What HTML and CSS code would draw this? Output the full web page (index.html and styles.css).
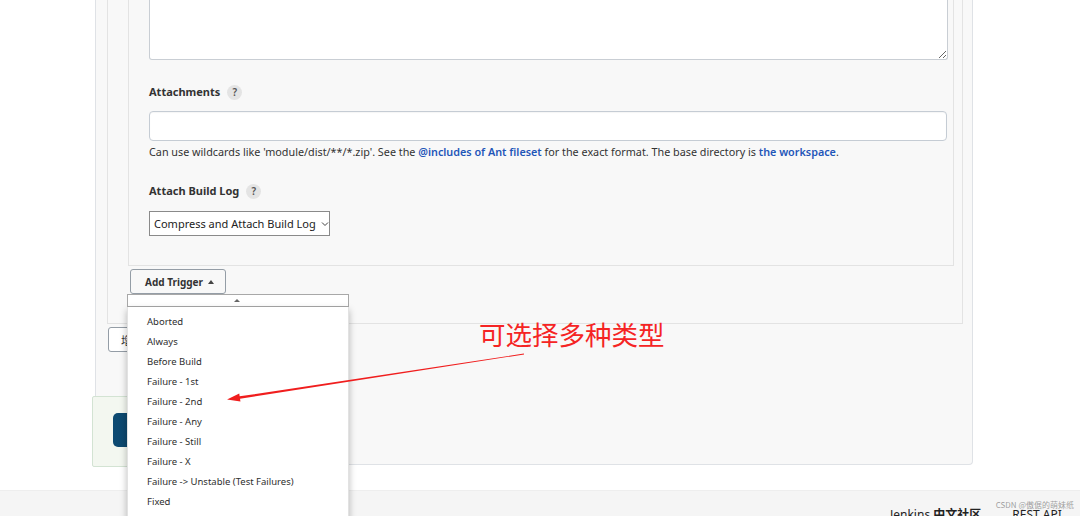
FILE: index.html
```html
<!DOCTYPE html>
<html lang="zh">
<head>
<meta charset="utf-8">
<title>Jenkins</title>
<link rel="stylesheet" href="styles.css">
</head>
<body>
<div class="main">
  <div class="panel">
    <div class="box2">
      <div class="box3">
        <textarea class="textarea"></textarea>
        <div class="label">Attachments <span class="help">?</span></div>
        <input class="input" type="text">
        <div class="hint">Can use wildcards like 'module/dist/**/*.zip'. See the <a class="link">@includes of Ant fileset</a> for the exact format. The base directory is <a class="link">the workspace</a>.</div>
        <div class="label label2">Attach Build Log <span class="help">?</span></div>
        <div class="select">Compress and Attach Build Log <svg class="chev" width="8" height="6" viewBox="0 0 8 6"><path d="M1 1.5 L4 4.5 L7 1.5" fill="none" stroke="#444" stroke-width="1"/></svg></div>
      </div>
      <button class="btn trigger">Add Trigger <span class="tri"></span></button>
    </div>
    <button class="btn postbtn">增加构建后操作步骤</button>
  </div>

  <div class="bottombar"><button class="savebtn">保存</button></div>

  <div class="dropdown">
    <div class="dd-head"><span class="tri small"></span></div>
    <ul class="dd-list">
      <li>Aborted</li>
      <li>Always</li>
      <li>Before Build</li>
      <li>Failure - 1st</li>
      <li>Failure - 2nd</li>
      <li>Failure - Any</li>
      <li>Failure - Still</li>
      <li>Failure - X</li>
      <li>Failure -&gt; Unstable (Test Failures)</li>
      <li>Fixed</li>
      <li>Not Built</li>
    </ul>
  </div>

  <div class="note">可选择多种类型</div>
  <svg class="arrow" width="1080" height="516" viewBox="0 0 1080 516">
    <polygon points="523.9,353.6 524.1,354.4 240.03,398.73 240.45,401.5 227,399.5 239.25,393.6 239.67,396.35" fill="#f01e1e"/>
  </svg>
</div>
<footer class="footer">
  <span class="f-link">Jenkins <b>中文社区</b></span>
  <span class="f-link api">REST API</span>
  <span class="watermark">CSDN @傲倨的萌妹纸</span>
</footer>
</body>
</html>
```
FILE: styles.css
```css
html, body {
  margin: 0;
  padding: 0;
  overflow: hidden;
  height: 516px;
  background: #ffffff;
  font-family: "Noto Sans", "Open Sans", "Noto Sans CJK SC", sans-serif;
  color: #333;
}
.main {
  position: relative;
  height: 490px;
}
.panel {
  margin-left: 95px;
  width: 878px;
  height: 465px;
  box-sizing: border-box;
  border: 1px solid #dfe2e6;
  border-top: 0;
  border-radius: 0 0 4px 4px;
  background: #f8f8f8;
  padding: 0 0 0 11px;
}
.box2 {
  width: 856px;
  box-sizing: border-box;
  border: 1px solid #e3e3e3;
  border-top: 0;
  padding: 0 8px 29px 20px;
}
.box3 {
  width: 826px;
  box-sizing: border-box;
  border: 1px solid #e3e3e3;
  border-top: 0;
  padding: 0 5px 29px 20px;
  display: flex;
  flex-direction: column;
  align-items: flex-start;
}
.textarea {
  display: block;
  width: 799px;
  height: 60px;
  box-sizing: border-box;
  margin: 0;
  border: 1px solid #c9ced4;
  border-top: 0;
  border-radius: 0 0 3px 3px;
  background: #fff;
  resize: vertical;
}
.label {
  margin-top: 22px;
  height: 20px;
  line-height: 20px;
  font-size: 11px;
  font-weight: 700;
  color: #333;
  display: flex;
  align-items: center;
}
.label2 { margin-top: 21px; }
.help {
  display: inline-flex;
  align-items: center;
  justify-content: center;
  width: 15px;
  height: 15px;
  margin-left: 7px;
  border-radius: 50%;
  background: #e4e4e4;
  color: #555;
  font-size: 10px;
  font-weight: 600;
}
.input {
  display: block;
  margin: 9px 0 0 0;
  width: 798px;
  height: 30px;
  box-sizing: border-box;
  border: 1px solid #c5ccd4;
  border-radius: 4px;
  background: #fff;
  box-shadow: inset 0 1px 1px rgba(0,0,0,0.04);
}
.hint {
  margin-top: 3px;
  line-height: 16px;
  font-size: 10.8px;
  color: #333;
  white-space: nowrap;
}
.link {
  color: #1f56b8;
  font-weight: 600;
  text-decoration: none;
}
.select {
  margin-top: 10px;
  height: 25px;
  width: 181px;
  box-sizing: border-box;
  border: 1px solid #8a8a8a;
  background: #fff;
  font-size: 11px;
  line-height: 23px;
  padding-left: 4px;
  display: flex;
  align-items: center;
  gap: 5px;
  color: #222;
  white-space: nowrap;
}
.chev { flex: none; }
.btn {
  font-family: inherit;
  box-sizing: border-box;
  height: 25px;
  border: 1px solid #949da6;
  border-radius: 3px;
  background: #f8f8f8;
  color: #333;
  padding: 0;
  cursor: pointer;
}
.trigger {
  margin: 3px 0 0 2px;
  width: 96px;
  font-size: 10px;
  font-weight: 700;
  display: flex;
  align-items: center;
  justify-content: center;
  gap: 5px;
  padding-left: 3px;
}
.tri {
  display: inline-block;
  width: 0;
  height: 0;
  border-left: 3.5px solid transparent;
  border-right: 3.5px solid transparent;
  border-bottom: 4px solid #444;
}
.tri.small {
  border-left-width: 3px;
  border-right-width: 3px;
  border-bottom: 3px solid #666;
}
.postbtn {
  margin: 3px 0 0 1px;
  width: 160px;
  font-size: 11px;
  text-align: left;
  padding-left: 12px;
  background: #fff;
}
.bottombar {
  position: absolute;
  left: 92px;
  top: 396px;
  width: 220px;
  height: 71px;
  box-sizing: border-box;
  border: 1px solid #d3e3d3;
  border-radius: 2px;
  background: #f3f7f0;
  padding: 16px 0 0 20px;
}
.savebtn {
  width: 70px;
  height: 34px;
  border: 0;
  border-radius: 5px;
  background: linear-gradient(90deg, #0c4a72, #14405f);
  color: #fff;
  font-size: 12px;
  font-family: inherit;
}
.dropdown {
  position: absolute;
  z-index: 5;
  left: 127px;
  top: 294px;
  width: 222px;
  height: 240px;
}
.dd-head {
  height: 13px;
  box-sizing: border-box;
  border: 1px solid #a8a8a8;
  background: #fff;
  display: flex;
  align-items: center;
  justify-content: center;
  padding-right: 2px;
}
.dd-list {
  list-style: none;
  margin: 0;
  padding: 5px 0 0 0;
  height: 220px;
  background: #fff;
  box-shadow: 0 3px 7px rgba(0,0,0,0.28);
  border-left: 1px solid #e2e2e2;
  border-right: 1px solid #e2e2e2;
}
.dd-list li {
  height: 20px;
  line-height: 20px;
  font-size: 9.5px;
  padding-left: 19px;
  color: #2e2e2e;
  white-space: nowrap;
}
.note {
  position: absolute;
  z-index: 6;
  left: 479px;
  top: 319px;
  font-family: "Noto Sans CJK SC", sans-serif;
  font-size: 26.5px;
  line-height: 30px;
  color: #f52424;
  white-space: nowrap;
}
.arrow {
  position: absolute;
  z-index: 6;
  left: 0;
  top: 0;
  pointer-events: none;
}
.footer {
  height: 26px;
  box-sizing: border-box;
  background: #f5f5f5;
  border-top: 1px solid #eeeeee;
  display: flex;
  padding: 14px 0 0 890px;
  gap: 31px;
  font-size: 12px;
  line-height: 20px;
  color: #222;
  position: relative;
  white-space: nowrap;
}
.f-link b { font-weight: 700; }
.watermark {
  position: absolute;
  right: 6px;
  top: 9px;
  font-family: "Noto Sans CJK SC", sans-serif;
  font-size: 8px;
  line-height: 10px;
  color: rgba(130,130,130,0.75);
}
```
